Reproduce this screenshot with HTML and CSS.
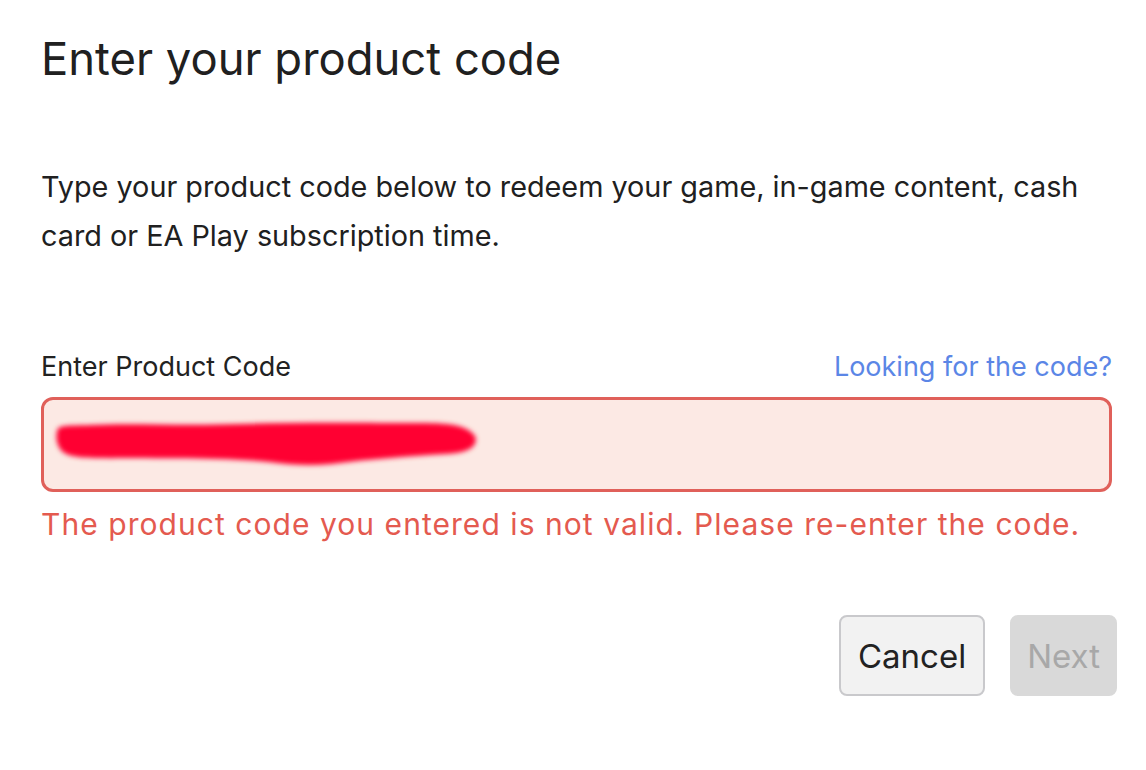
FILE: index.html
```html
<!DOCTYPE html>
<html lang="en">
<head>
<meta charset="utf-8">
<title>Enter your product code</title>
<link rel="stylesheet" href="styles.css">
</head>
<body>
<main class="dialog">
  <h1 class="title">Enter your product code</h1>
  <p class="intro">Type your product code below to redeem your game, in-game content, cash card or EA Play subscription time.</p>
  <div class="field-head">
    <label class="label" for="code">Enter Product Code</label>
    <a class="help-link" href="#">Looking for the code?</a>
  </div>
  <div class="input error" id="code">
    <svg class="scribble" width="440" height="70" viewBox="0 0 440 70" aria-hidden="true">
      <defs>
        <filter id="blur" x="-10%" y="-50%" width="120%" height="200%">
          <feGaussianBlur stdDeviation="2.4"/>
        </filter>
      </defs>
      <path filter="url(#blur)" fill="#ff0030" transform="translate(-3,-8)" d="M16 30 C16 22 28 24 50 23 C90 21 140 24 200 22 C260 20 330 21 380 21 C412 21 426 24 434 34 C438 45 426 51 405 52 C370 54 330 57 290 62 C270 64 250 63 228 60 C180 55 120 57 62 56 C40 56 22 55 18 45 C15 39 15 34 16 30 Z"/>
    </svg>
  </div>
  <p class="error-msg">The product code you entered is not valid. Please re-enter the code.</p>
  <div class="actions">
    <button class="btn btn-secondary" type="button">Cancel</button>
    <button class="btn btn-disabled" type="button" disabled>Next</button>
  </div>
</main>
</body>
</html>
```
FILE: styles.css
```css
* { box-sizing: border-box; }
html, body { margin: 0; padding: 0; background: #ffffff; }
body {
  font-family: Inter, "Noto Sans", sans-serif;
  color: #202020;
}
.dialog {
  padding: 27px 34px 0 41px;
  display: flex;
  flex-direction: column;
}
.title {
  margin: 0;
  font-size: 45.4px;
  font-weight: 400;
  line-height: 64px;
}
.intro {
  margin: 71px 0 0;
  font-size: 28.8px;
  line-height: 49px;
  font-weight: 400;
}
.field-head {
  margin-top: 90px;
  display: flex;
  justify-content: space-between;
  align-items: baseline;
}
.label { font-size: 27px; color: #222; }
.help-link { font-size: 27px; color: #5b86e6; text-decoration: none; }
.input {
  margin-top: 14px;
  height: 95px;
  border: 3px solid #e0605a;
  border-radius: 12px;
  background: #fce9e4;
  padding: 0;
  display: flex;
  align-items: center;
}
.scribble { display: block; }
.error-msg {
  margin: 12px 0 0;
  font-size: 30px;
  letter-spacing: 1.05px;
  color: #e45a4f;
  line-height: 40px;
}
.actions {
  margin-top: 71px;
  margin-right: -5px;
  display: flex;
  justify-content: flex-end;
  gap: 25px;
}
.btn {
  height: 81px;
  font-family: inherit;
  font-size: 33px;
  border-radius: 8px;
}
.btn-secondary {
  padding: 0 17px;
  background: #f2f2f2;
  border: 2px solid #c9c9cc;
  color: #222;
}
.btn-disabled {
  padding: 0 15px;
  background: #d9d9d9;
  border: 2px solid #d9d9d9;
  color: #a8a8a8;
}
```
